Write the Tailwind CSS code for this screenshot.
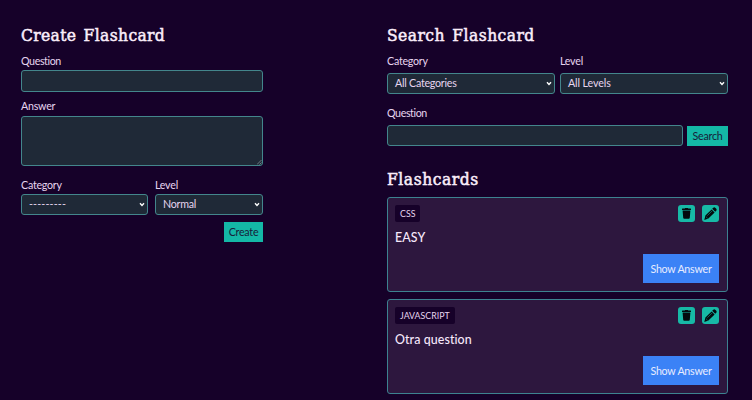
<!DOCTYPE html>
<html lang="en">
<head>
<meta charset="utf-8">
<title>Flashcards</title>
<script src="https://cdn.jsdelivr.net/npm/@tailwindcss/browser@4"></script>
</head>
<body class="h-[400px] w-[752px] overflow-hidden bg-[#160129] text-[#e6d5ef] font-[Lato,sans-serif] text-[10.7px] leading-[14px] tracking-[-0.25px]">
<svg class="hidden">
  <symbol id="chev" viewBox="0 0 6 5"><path d="M1 1.2 3 3.4 5 1.2" fill="none" stroke="#fff" stroke-width="1.4"/></symbol>
  <symbol id="trash" viewBox="0 0 17 17"><path d="M4 4.1Q4 3.7 4.5 3.6H6.7L7.2 3.1H9.8L10.3 3.6H12.6Q13 3.7 13 4.1V5H4ZM4.6 5.6H12.4L11.8 12.8Q11.7 13.8 10.8 13.8H6.2Q5.3 13.8 5.2 12.8Z" fill="#030b0e"/></symbol>
  <symbol id="pencil" viewBox="0 0 17 17"><path d="M10.2 3.8 11.3 2.7Q12.3 1.9 13.2 2.7L14.3 3.8Q15.1 4.7 14.3 5.7L13.2 6.8ZM9.6 4.4 12.6 7.4 6.4 13.6 2.3 14.9 3.4 10.6Z" fill="#030b0e"/><path d="M5.3 10.7 10 6M3.9 11.6 5.5 13.2" stroke="#17b9a6" stroke-width=".5"/></symbol>
</svg>
<main class="flex pl-[21px] pt-[24px]">
  <section class="w-[242px]">
    <h1 class="h-[30px] w-max whitespace-nowrap font-['DejaVu_Serif_Condensed','DejaVu_Serif',serif] text-[17.3px] leading-[23px] tracking-[0.35px] [word-spacing:2px] [-webkit-text-stroke:0.5px_#fbeefa] text-[#fbeefa]">Create Flashcard</h1>
    <label class="block h-[16px] tracking-[-0.4px]">Question</label>
    <div class="h-[22px] rounded-[3px] border border-[#43868c] bg-[#1f2937]"></div>
    <label class="mt-[7px] block h-[17px]">Answer</label>
    <div class="flex h-[50px] items-end justify-end rounded-[3px] border border-[#43868c] bg-[#1f2937]">
      <svg class="size-[5px]" viewBox="0 0 5 5"><path d="M0 4.5 4.5 0M2.5 4.5 4.5 2.5" stroke="#8fa0aa" stroke-width=".7"/></svg>
    </div>
    <div class="mt-[12px] flex gap-[7px]">
      <div class="w-[127px]"><label class="block h-[16px]">Category</label>
        <div class="flex h-[21px] items-center justify-between rounded-[3px] border border-[#43868c] bg-[#1f2937] pb-px pl-[7px] pr-[2px]"><span class="tracking-[0.15px]">---------</span><svg class="h-[5px] w-[6px]"><use href="#chev"/></svg></div></div>
      <div class="w-[108px]"><label class="block h-[16px]">Level</label>
        <div class="flex h-[21px] items-center justify-between rounded-[3px] border border-[#43868c] bg-[#1f2937] pb-px pl-[7px] pr-[2px]"><span>Normal</span><svg class="h-[5px] w-[6px]"><use href="#chev"/></svg></div></div>
    </div>
    <div class="mt-[7px] flex justify-end"><button class="h-[20px] w-[39px] bg-[#14b8a6] text-[#17213a]">Create</button></div>
  </section>

  <section class="ml-[124px] w-[341px]">
    <h1 class="h-[30px] w-max whitespace-nowrap font-['DejaVu_Serif_Condensed','DejaVu_Serif',serif] text-[17.3px] leading-[23px] tracking-[0.45px] [word-spacing:2px] [-webkit-text-stroke:0.5px_#fbeefa] text-[#fbeefa]">Search Flashcard</h1>
    <div class="flex gap-[5px]">
      <div class="w-[168px]"><label class="block h-[19px]">Category</label>
        <div class="flex h-[21px] items-center justify-between rounded-[3px] border border-[#43868c] bg-[#1f2937] pb-px pl-[7px] pr-[2px]"><span>All Categories</span><svg class="h-[5px] w-[6px]"><use href="#chev"/></svg></div></div>
      <div class="w-[168px]"><label class="block h-[19px]">Level</label>
        <div class="flex h-[21px] items-center justify-between rounded-[3px] border border-[#43868c] bg-[#1f2937] pb-px pl-[7px] pr-[2px]"><span class="tracking-[-0.1px]">All Levels</span><svg class="h-[5px] w-[6px]"><use href="#chev"/></svg></div></div>
    </div>
    <label class="mt-[12px] block h-[19px] tracking-[-0.4px]">Question</label>
    <div class="flex items-end justify-between">
      <div class="h-[21px] w-[296px] rounded-[3px] border border-[#43868c] bg-[#1f2937]"></div>
      <button class="h-[20px] w-[41px] bg-[#14b8a6] text-[#17213a]">Search</button>
    </div>
    <h2 class="mt-[22px] h-[29px] w-max font-['DejaVu_Serif_Condensed','DejaVu_Serif',serif] text-[17.3px] leading-[23px] tracking-[0.55px] [-webkit-text-stroke:0.5px_#fbeefa] text-[#fbeefa]">Flashcards</h2>
    <article class="flex h-[95px] flex-col justify-between rounded-[3px] border border-[#3d8290] bg-[#2d173e] p-[7px] pr-[8px] pb-[8px]">
      <div>
        <div class="flex justify-between">
          <span class="h-[17px] rounded-[2px] bg-[#160129] px-[5px] text-[8.8px] leading-[17px] tracking-normal">CSS</span>
          <span class="flex gap-[7px]"><svg class="size-[17px] rounded-[3px] bg-[#17b9a6]"><use href="#trash"/></svg><svg class="size-[17px] rounded-[3px] bg-[#17b9a6]"><use href="#pencil"/></svg></span>
        </div>
        <p class="mt-[7px] text-[12.4px] leading-[18px] tracking-[0.1px] font-medium text-[#f6e8fb]">EASY</p>
      </div>
      <button class="h-[29px] w-[76px] self-end bg-[#3b82f6] text-[#e8ecff]">Show Answer</button>
    </article>
    <article class="mt-[7px] flex h-[95px] flex-col justify-between rounded-[3px] border border-[#3d8290] bg-[#2d173e] p-[7px] pr-[8px] pb-[8px]">
      <div>
        <div class="flex justify-between">
          <span class="h-[17px] rounded-[2px] bg-[#160129] px-[5px] text-[8.8px] leading-[17px] tracking-normal">JAVASCRIPT</span>
          <span class="flex gap-[7px]"><svg class="size-[17px] rounded-[3px] bg-[#17b9a6]"><use href="#trash"/></svg><svg class="size-[17px] rounded-[3px] bg-[#17b9a6]"><use href="#pencil"/></svg></span>
        </div>
        <p class="mt-[7px] text-[12.4px] leading-[18px] tracking-[0.1px] font-medium text-[#f6e8fb]">Otra question</p>
      </div>
      <button class="h-[29px] w-[76px] self-end bg-[#3b82f6] text-[#e8ecff]">Show Answer</button>
    </article>
  </section>
</main>
</body>
</html>
